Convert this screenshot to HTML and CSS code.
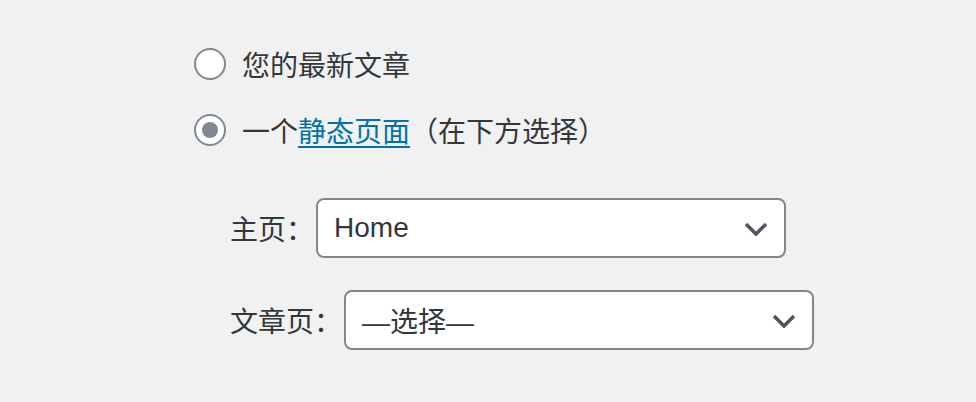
FILE: index.html
```html
<!DOCTYPE html>
<html lang="zh-CN">
<head>
<meta charset="utf-8">
<link rel="stylesheet" href="styles.css">
</head>
<body>
<div class="panel">
  <fieldset class="choices">
    <label class="choice">
      <span class="radio"></span>
      <span class="choice-text">您的最新文章</span>
    </label>
    <label class="choice choice-second">
      <span class="radio radio-checked"><span class="radio-dot"></span></span>
      <span class="choice-text">一个<a class="link" href="#">静态页面</a>（在下方选择）</span>
    </label>
  </fieldset>
  <ul class="page-list">
    <li class="page-row">
      <span class="page-label">主页：</span>
      <div class="select">
        <span class="select-value">Home</span>
        <svg class="chevron" width="24" height="14" viewBox="0 0 24 14"><polyline points="2,2 12,12 22,2" fill="none" stroke="#50575e" stroke-width="3.6"/></svg>
      </div>
    </li>
    <li class="page-row page-row-second">
      <span class="page-label">文章页：</span>
      <div class="select">
        <span class="select-value">—选择—</span>
        <svg class="chevron" width="24" height="14" viewBox="0 0 24 14"><polyline points="2,2 12,12 22,2" fill="none" stroke="#50575e" stroke-width="3.6"/></svg>
      </div>
    </li>
  </ul>
</div>
</body>
</html>
```
FILE: styles.css
```css
html, body {
  margin: 0;
  padding: 0;
  background: #f1f1f1;
}
body {
  width: 976px;
  height: 402px;
  overflow: hidden;
  font-family: "Liberation Sans", "Noto Sans CJK SC", sans-serif;
  font-size: 28px;
  color: #32373c;
}
.panel {
  padding: 48px 0 0 194px;
}
.choices {
  border: 0;
  margin: 0;
  padding: 0;
  display: flex;
  flex-direction: column;
}
.choice {
  display: flex;
  align-items: center;
  height: 32px;
  line-height: 32px;
}
.choice-second {
  margin-top: 34px;
}
.radio {
  box-sizing: border-box;
  width: 32px;
  height: 32px;
  border: 2px solid #7e8993;
  border-radius: 50%;
  background: #fff;
  margin-right: 16px;
  display: flex;
  align-items: center;
  justify-content: center;
  flex-shrink: 0;
}
.radio-dot {
  width: 16px;
  height: 16px;
  border-radius: 50%;
  background: #7e8993;
}
.choice-text {
  font-family: "Noto Sans CJK SC", sans-serif;
  white-space: nowrap;
}
.link {
  color: #0073aa;
  text-decoration: underline;
  text-decoration-thickness: 2px;
  text-underline-offset: 4px;
}
.page-list {
  list-style: none;
  margin: 52px 0 0 36px;
  padding: 0;
  display: flex;
  flex-direction: column;
}
.page-row {
  display: flex;
  align-items: center;
  height: 60px;
}
.page-row-second {
  margin-top: 32px;
}
.page-label {
  font-family: "Noto Sans CJK SC", sans-serif;
  margin-right: 2px;
  white-space: nowrap;
}
.select {
  box-sizing: border-box;
  width: 470px;
  height: 60px;
  border: 2px solid #7e8993;
  border-radius: 8px;
  background: #fff;
  display: flex;
  align-items: center;
  justify-content: space-between;
  padding: 0 16px 0 16px;
}
.select-value {
  font-family: "Liberation Sans", "Noto Sans CJK SC", sans-serif;
  white-space: nowrap;
}
.chevron {
  display: block;
  margin-top: 2px;
}
```
